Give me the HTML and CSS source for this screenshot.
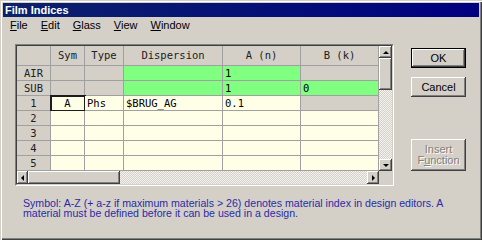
FILE: index.html
```html
<!DOCTYPE html>
<html lang="en">
<head>
  <meta charset="UTF-8">
  <title>Film Indices</title>
  <link rel="stylesheet" href="styles.css">
</head>
<body>

<div class="window">
  <div class="titlebar">Film Indices</div>
  <div class="menubar">
    <span><u>F</u>ile</span>
    <span><u>E</u>dit</span>
    <span><u>G</u>lass</span>
    <span><u>V</u>iew</span>
    <span><u>W</u>indow</span>
  </div>

  <div class="content">
    <div class="main">
      <div class="grid-frame">
        <div class="grid-inner">
          <div class="sheet">
            <div class="cell head"></div>
            <div class="cell head">Sym</div>
            <div class="cell head">Type</div>
            <div class="cell head">Dispersion</div>
            <div class="cell head">A (n)</div>
            <div class="cell head">B (k)</div>

            <div class="cell rowhead">AIR</div>
            <div class="cell grey"></div>
            <div class="cell grey"></div>
            <div class="cell green"></div>
            <div class="cell green">1</div>
            <div class="cell grey"></div>

            <div class="cell rowhead">SUB</div>
            <div class="cell grey"></div>
            <div class="cell grey"></div>
            <div class="cell green"></div>
            <div class="cell green">1</div>
            <div class="cell green">0</div>

            <div class="cell rowhead">1</div>
            <div class="cell center focus">A</div>
            <div class="cell">Phs</div>
            <div class="cell">$BRUG_AG</div>
            <div class="cell">0.1</div>
            <div class="cell grey"></div>

            <div class="cell rowhead">2</div>
            <div class="cell"></div><div class="cell"></div><div class="cell"></div><div class="cell"></div><div class="cell"></div>

            <div class="cell rowhead">3</div>
            <div class="cell"></div><div class="cell"></div><div class="cell"></div><div class="cell"></div><div class="cell"></div>

            <div class="cell rowhead">4</div>
            <div class="cell"></div><div class="cell"></div><div class="cell"></div><div class="cell"></div><div class="cell"></div>

            <div class="cell rowhead">5</div>
            <div class="cell"></div><div class="cell"></div><div class="cell"></div><div class="cell"></div><div class="cell"></div>
          </div>

          <div class="vscroll">
            <div class="sb-btn"><span class="arrow up"></span></div>
            <div class="sb-btn"></div>
            <div class="track"></div>
            <div class="sb-btn"><span class="arrow down"></span></div>
          </div>

          <div class="hscroll">
            <div class="sb-btn"><span class="arrow left"></span></div>
            <div class="sb-btn"></div>
            <div class="track"></div>
            <div class="sb-btn"><span class="arrow right"></span></div>
          </div>

          <div class="corner"></div>
        </div>
      </div>

      <div class="buttons">
        <div class="btn default">OK</div>
        <div class="btn">Cancel</div>
        <div class="btn disabled">Insert<br>F<u>u</u>nction</div>
      </div>
    </div>

    <p class="note">Symbol: A-Z (+ a-z if maximum materials &gt; 26) denotes material index in design editors. A material must be defined before it can be used in a design.</p>
  </div>
</div>

</body>
</html>
```

FILE: styles.css
```css
body {
    margin: 0;
    font-family: "Liberation Sans", Arial, sans-serif;
    font-size: 11px;
    color: #000;
}

.window {
    width: 482px;
    height: 240px;
    box-sizing: border-box;
    padding: 3px;
    background-color: #d4d0c8;
    box-shadow: inset 1px 1px #d4d0c8, inset 2px 2px #fff, inset -1px -1px #404040, inset -2px -2px #808080;
}

.titlebar {
    height: 14px;
    line-height: 14px;
    padding-left: 2px;
    background: linear-gradient(to right, #0c226c, #000080);
    color: #fff;
    font-weight: bold;
}

.menubar {
    display: flex;
    gap: 13px;
    height: 17px;
    line-height: 17px;
    padding-left: 7px;
}

.content {
    padding: 10px 0 0 12px;
}

.main {
    display: flex;
    align-items: flex-start;
}

/* sunken frame round the grid */
.grid-frame {
    border: 1px solid;
    border-color: #808080 #fff #fff #808080;
}

.grid-inner {
    display: grid;
    grid-template-columns: 362px 13px;
    grid-template-rows: 125px 13px;
    border: 1px solid;
    border-color: #404040 #d4d0c8 #d4d0c8 #404040;
}

.sheet {
    display: grid;
    grid-template-columns: 34px 34px 39px 99px 78px 78px;
    grid-template-rows: 20px;
    grid-auto-rows: 15px;
    font-family: "DejaVu Sans Mono", monospace;
    font-size: 10.5px;
}

.cell {
    box-sizing: border-box;
    border-right: 1px solid #a0a0a0;
    border-bottom: 1px solid #a0a0a0;
    padding-left: 2px;
    line-height: 14px;
    white-space: nowrap;
    overflow: hidden;
    background-color: #ffffe8;
}

.cell.head {
    background-color: #d4d0c8;
    text-align: center;
    line-height: 19px;
    padding: 0;
    color: #202020;
}

.cell.rowhead {
    background-color: #d4d0c8;
    text-align: center;
    padding: 0;
    color: #202020;
}

.cell.grey {
    background-color: #d4d0c8;
}

.cell.green {
    background-color: #80ff80;
}

.cell.center {
    text-align: center;
    padding: 0;
}

.cell.focus {
    overflow: visible;
    outline: 2px solid #1c1c1c;
    outline-offset: -1px;
}

/* scroll bars */
.vscroll {
    display: grid;
    grid-template-rows: 12px 32px 1fr 12px;
}

.hscroll {
    display: grid;
    grid-template-columns: 11px 92px 1fr 12px;
}

.track {
    background: repeating-conic-gradient(#f4f3f0 0 25%, #d4d0c8 0 50%) 0 0 / 2px 2px;
}

.sb-btn {
    display: flex;
    align-items: center;
    justify-content: center;
    background-color: #d4d0c8;
    box-shadow: inset -1px -1px #404040, inset 1px 1px #fff, inset -2px -2px #808080;
}

.corner {
    background-color: #d4d0c8;
}

.arrow {
    width: 0;
    height: 0;
    border: 3px solid transparent;
}

.arrow.up {
    border-top-width: 0;
    border-bottom-color: #000;
}

.arrow.down {
    border-bottom-width: 0;
    border-top-color: #000;
}

.arrow.left {
    border-left-width: 0;
    border-right-color: #000;
}

.arrow.right {
    border-right-width: 0;
    border-left-color: #000;
}

/* dialog buttons */
.buttons {
    display: flex;
    flex-direction: column;
    width: 55px;
    margin-left: 17px;
    padding-top: 4px;
}

.btn {
    box-sizing: border-box;
    height: 20px;
    line-height: 20px;
    text-align: center;
    background-color: #d4d0c8;
    box-shadow: inset -1px -1px #404040, inset 1px 1px #fff, inset -2px -2px #808080;
}

.btn + .btn {
    margin-top: 9px;
}

.btn.default {
    border: 1px solid #000;
    line-height: 18px;
}

.btn.disabled {
    height: 32px;
    margin-top: 42px;
    padding-top: 5px;
    line-height: 11px;
    color: #808080;
    text-shadow: 1px 1px #fff;
}

.note {
    width: 432px;
    margin: 12px 0 0 8px;
    font-size: 10.6px;
    line-height: 10px;
    color: #2a2aa8;
}
```
